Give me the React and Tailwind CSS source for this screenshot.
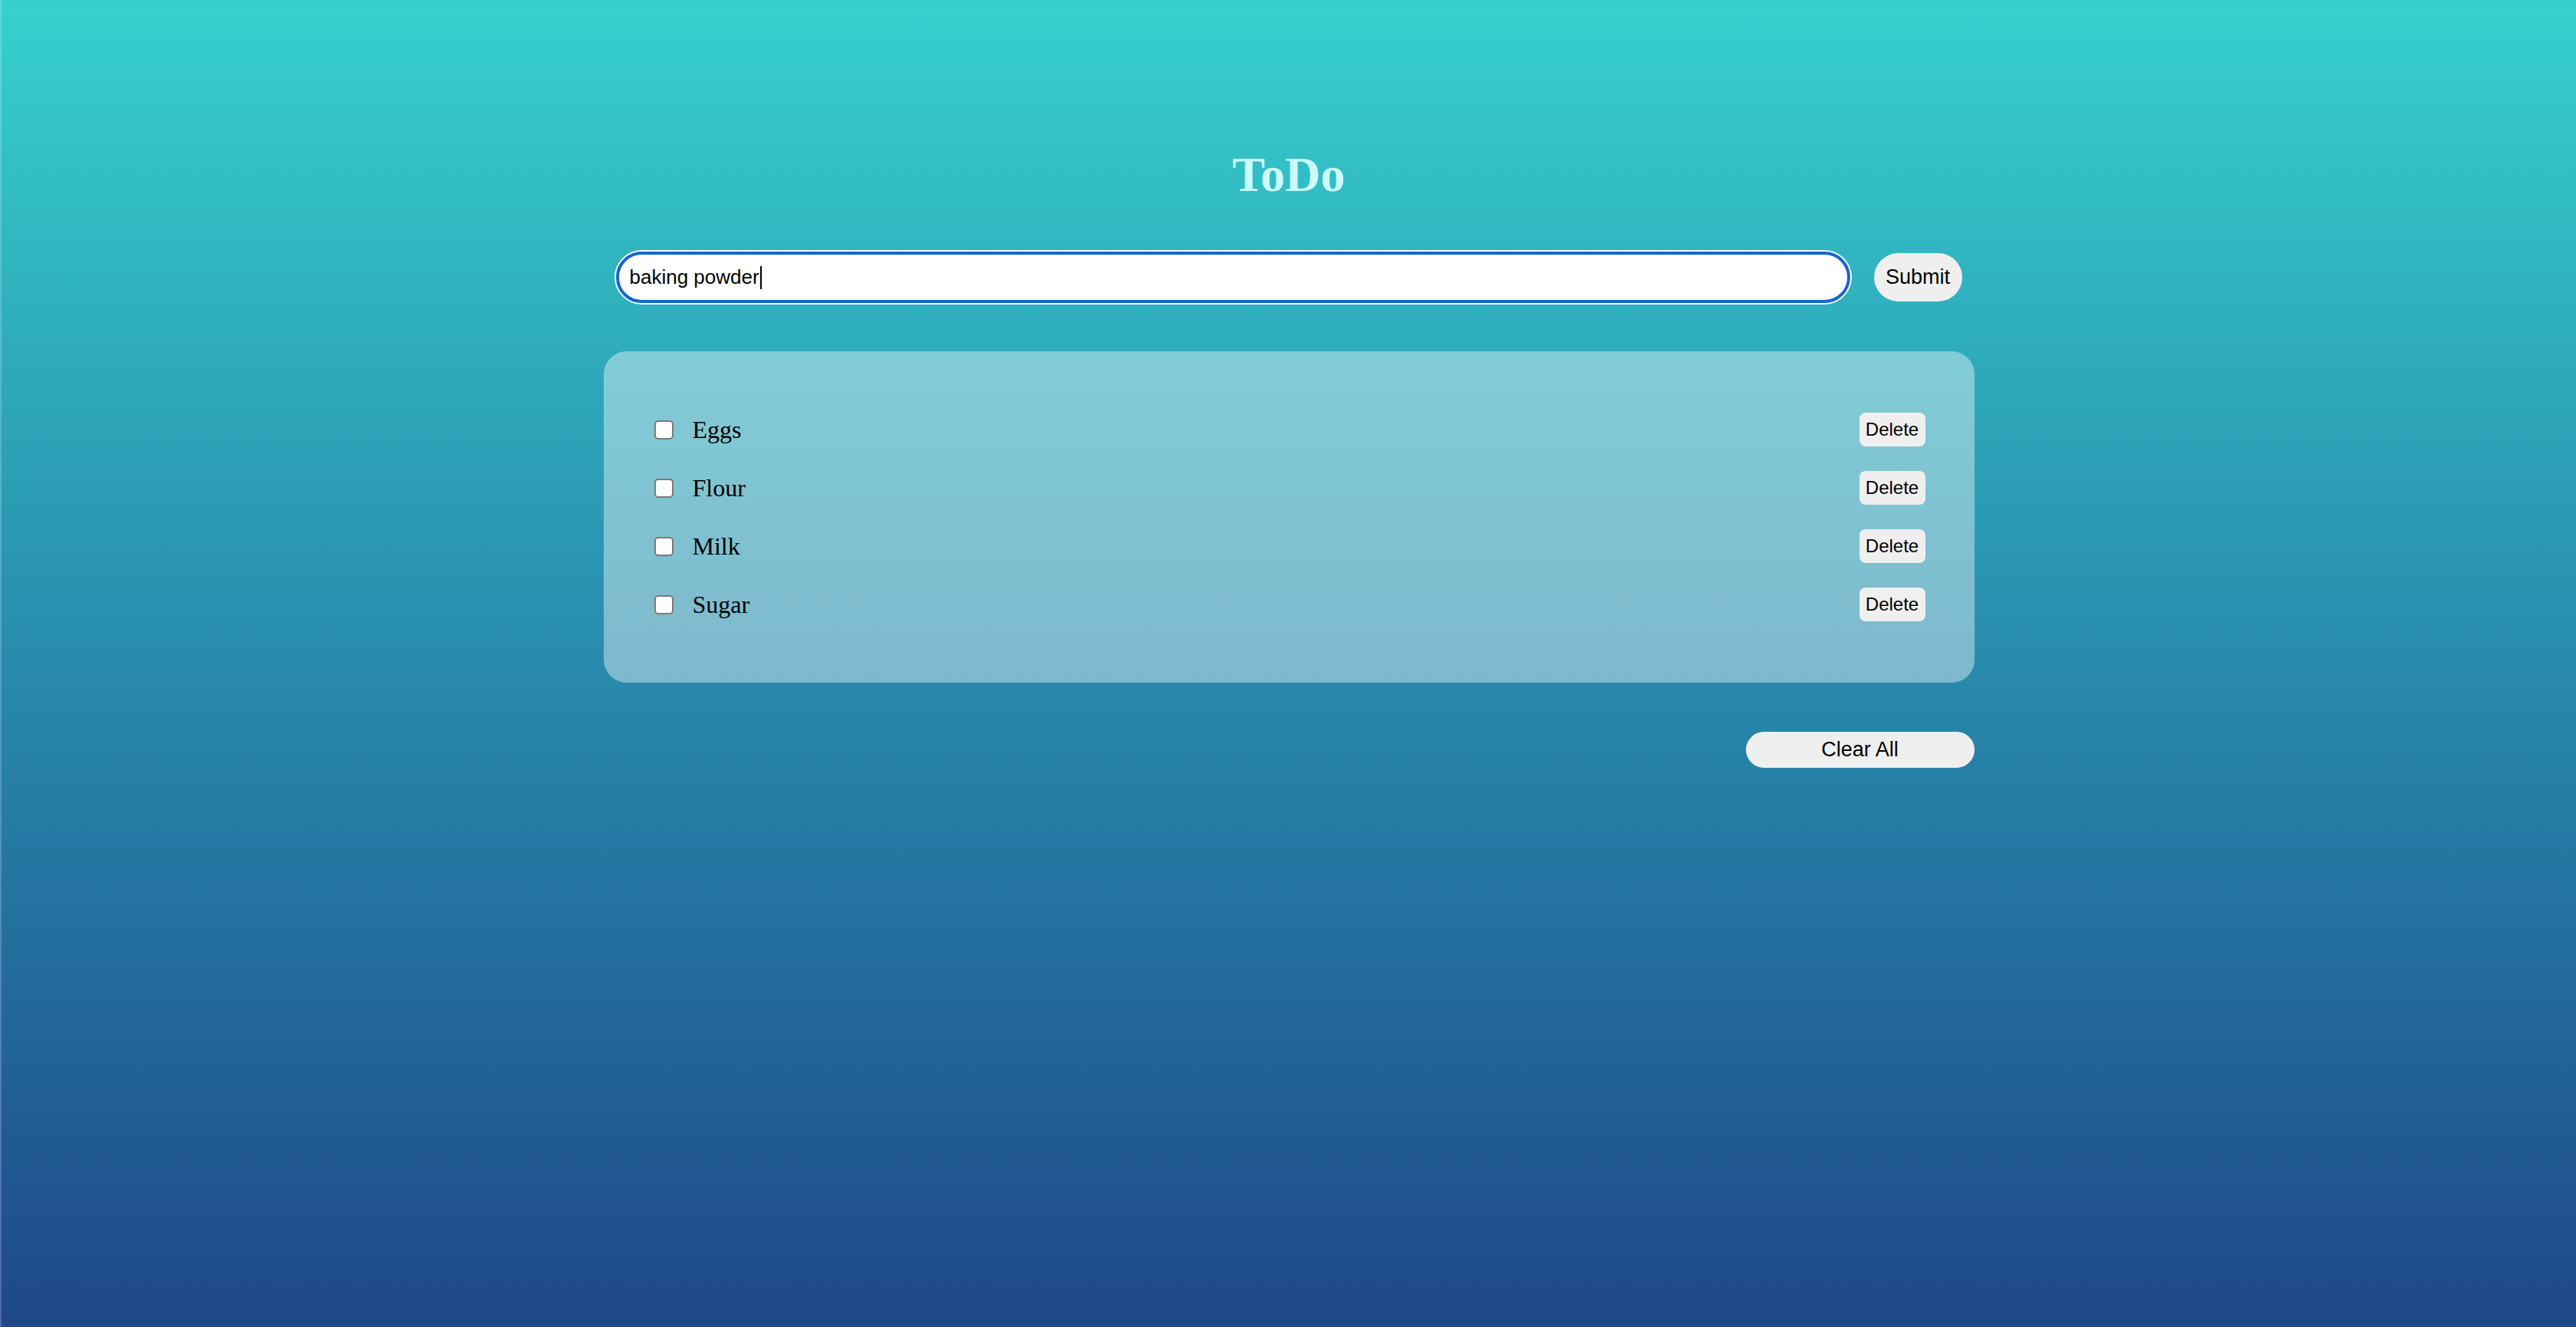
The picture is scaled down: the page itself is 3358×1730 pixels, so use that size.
import React, { useState } from "react";

export default function App() {
  const [items, setItems] = useState(["Eggs", "Flour", "Milk", "Sugar"]);
  const [value, setValue] = useState("baking powder");

  return (
    <div
      className="min-h-[1730px] w-full bg-gradient-to-b from-[#37d1cd] to-[#1f4789] border-l-2 border-white/20 flex flex-col items-center"
      style={{ fontFamily: '"Liberation Sans", Arial, sans-serif' }}
    >
      <h1
        className="mt-[196px] h-[64px] text-[64px] leading-none font-bold text-[#cbfbfb] text-center"
        style={{ fontFamily: '"Liberation Serif", "Times New Roman", serif' }}
      >
        ToDo
      </h1>

      <div className="mt-[68px] flex items-center gap-[31px]">
        <div className="relative">
          <input
            value={value}
            onChange={(e) => setValue(e.target.value)}
            className="w-[1609px] h-[67px] rounded-full bg-white border-4 border-[#1766cf] shadow-[0_0_0_2px_#ffffff] pl-[14px] text-[26px] text-black outline-none caret-black"
            style={{ fontFamily: '"Liberation Sans", Arial, sans-serif' }}
          />
          <span className="pointer-events-none absolute left-[188px] top-[19px] w-[2px] h-[30px] bg-black" />
        </div>
        <button className="w-[115px] h-[63px] rounded-full bg-[#efefef] text-[27px] text-black">
          Submit
        </button>
      </div>

      <div className="mt-[63px] w-[1787px] h-[432px] rounded-[30px] bg-white/40 pt-[80px] pl-[66px] pr-[64px] flex flex-col gap-[32px]">
        {items.map((item) => (
          <div key={item} className="h-[44px] flex items-center justify-between">
            <div className="flex items-center gap-[25px]">
              <input
                type="checkbox"
                className="appearance-none w-[25px] h-[25px] rounded-[5px] border-2 border-[#7a7a7a] bg-white"
              />
              <span
                className="text-[32px] text-black leading-none"
                style={{ fontFamily: '"Liberation Serif", "Times New Roman", serif' }}
              >
                {item}
              </span>
            </div>
            <button
              onClick={() => setItems(items.filter((i) => i !== item))}
              className="w-[86px] h-[44px] rounded-[8px] bg-[#efefef] text-[24px] text-black"
            >
              Delete
            </button>
          </div>
        ))}
      </div>

      <div className="mt-[64px] w-[1787px] flex justify-end">
        <button
          onClick={() => setItems([])}
          className="w-[298px] h-[47px] rounded-full bg-[#efefef] text-[27px] text-black"
        >
          Clear All
        </button>
      </div>
    </div>
  );
}
